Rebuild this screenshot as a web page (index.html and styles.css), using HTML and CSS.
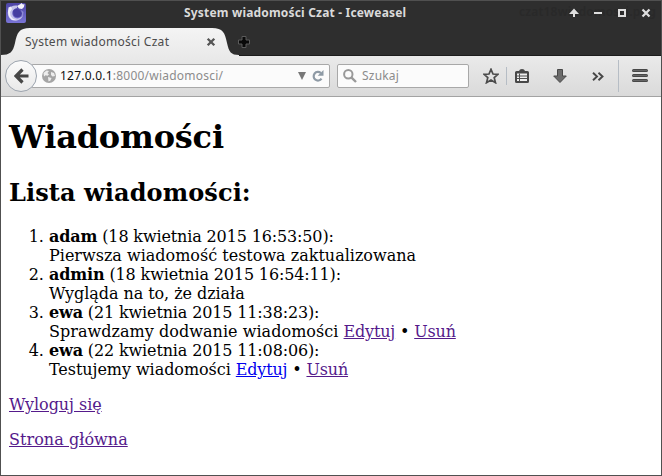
FILE: index.html
```html
<!DOCTYPE html>
<html lang="pl">
<head>
<meta charset="utf-8">
<title>System wiadomości Czat</title>
<link rel="stylesheet" href="styles.css">
</head>
<body>
<div class="window">
  <header class="titlebar">
    <svg class="app-icon" width="20" height="20" viewBox="0 0 20 20">
      <defs><linearGradient id="app" x1="0" y1="0" x2="0" y2="1"><stop offset="0" stop-color="#4d45a5"/><stop offset="1" stop-color="#7974d6"/></linearGradient></defs>
      <rect width="20" height="20" rx="2" fill="url(#app)"/>
      <path d="M11 2.500Q5 2 3 6Q.5 10 3 14.500Q6 18.500 11 17.500Q15.500 16.500 17 12.500L15 14Q12 16.500 8.500 14.500Q5.500 12 6.500 8.500Q7.500 5.500 11 5Z" fill="#c4c3ea"/>
      <path d="M2.500 4.500L5 3.500L6 6L4 9L4.500 13L6.500 15.500L10 17L6 17L3 13.500L2 9Z" fill="#f0f0fc"/>
      <path d="M7 8Q9 5 13 6.500L16 10Q16 13 13 14Q9 15 7.500 12Z" fill="#453ea0"/>
      <path d="M11 3L14.500 1L15.500 0L17 1.500L18.500 1L18 4L16 6L13 5.500Z" fill="#f4f4fb"/>
      <path d="M15 7L17.500 9L17 13L15.500 14L16 10Z" fill="#8e8bd6"/>
    </svg>
    <h1 class="window-title">System wiadomości Czat - Iceweasel</h1>
    <span class="ghost">czat18wiadomosci.png</span>
    <div class="controls">
      <svg width="10" height="10" viewBox="0 0 10 10"><path d="M5 .5L10 6H6V9H4V6H0Z" fill="#dedede"/></svg>
      <svg width="10" height="10" viewBox="0 0 10 10"><path d="M1 4h8v2H1Z" fill="#dedede"/></svg>
      <svg width="10" height="10" viewBox="0 0 10 10"><path d="M2 2h6v6H2Z" fill="none" stroke="#dedede" stroke-width="2"/></svg>
      <svg width="10" height="10" viewBox="0 0 10 10"><path d="M1.500 1.500L8.500 8.500M8.500 1.500L1.500 8.500" stroke="#dedede" stroke-width="2.300"/></svg>
    </div>
  </header>

  <nav class="tabs">
    <div class="tab">
      <svg class="tab-shape" width="240" height="28" viewBox="0 0 240 28">
        <defs><linearGradient id="tab" x1="0" y1="0" x2="0" y2="1"><stop offset="0" stop-color="#f4f4f4"/><stop offset="1" stop-color="#eaeaea"/></linearGradient></defs>
        <path d="M0 28V27C9 27 12 24 14 15C16 5 18 0 29 0H211C222 0 224 5 226 15C228 24 230 27 238 27V28Z" fill="url(#tab)"/>
      </svg>
      <span class="tab-label">System wiadomości Czat</span>
      <svg class="tab-close" width="10" height="10" viewBox="0 0 10 10"><path d="M1.700 1.700L8.300 8.300M8.300 1.700L1.700 8.300" stroke="#555" stroke-width="2.300"/></svg>
    </div>
    <svg class="tab-new" width="12" height="12" viewBox="0 0 12 12"><path d="M4 .5H8V4H11.500V8H8V11.500H4V8H.5V4H4Z" fill="#090909" stroke="#5b5b5b"/></svg>
  </nav>

  <div class="toolbar">
    <div class="back">
      <svg width="15" height="16" viewBox="0 0 15 16"><path d="M8.500 1.500L2 8L8.500 14.500M2.500 8H14.500" fill="none" stroke="#474747" stroke-width="3.200"/></svg>
    </div>
    <div class="address">
      <svg class="globe" width="14" height="14" viewBox="0 0 14 14"><circle cx="7" cy="7" r="7" fill="#a5a5a5"/><path d="M1.500 4L4.500 1.500L7 2L5.500 4L7 5.500L5 7L4 6L2 7.500ZM9 3L12 4L13 7L10.500 7.500L9 6ZM6 8L9.500 9L8.500 11.500L6.500 12.500Z" fill="#ededed"/></svg>
      <span class="url"><b>127.0.0.1</b>:8000/wiadomosci/</span>
      <svg class="dropmark" width="8" height="8" viewBox="0 0 8 8"><path d="M0 0H8L4 8Z" fill="#777"/></svg>
      <svg class="reload" width="12" height="12" viewBox="0 0 12 12"><path d="M9.500 8.700A4.300 4.300 0 1 1 8.800 3" fill="none" stroke="#8e9aa5" stroke-width="2.200"/><path d="M11.500 0V5.800H5.700Z" fill="#8e9aa5"/></svg>
    </div>
    <div class="search">
      <svg width="14" height="14" viewBox="0 0 14 14"><circle cx="5.300" cy="5.300" r="4.200" fill="none" stroke="#999" stroke-width="2"/><path d="M8.300 8.300L13 13" stroke="#999" stroke-width="2.400"/></svg>
      <span>Szukaj</span>
    </div>
    <svg class="star" width="16" height="16" viewBox="0 0 16 16"><path d="M8 1.300L10 6L15 6.300L11.200 9.600L12.500 14.700L8 12L3.500 14.700L4.800 9.600L1 6.300L6 6Z" fill="none" stroke="#4c4c4c" stroke-width="1.700"/></svg>
    <span class="divider short"></span>
    <svg class="clip" width="14" height="14" viewBox="0 0 14 14"><path d="M1.500 2H4Q4.500 0 7 0T10 2H12.500Q14 2 14 3.500V12.500Q14 14 12.500 14H1.500Q0 14 0 12.500V3.500Q0 2 1.500 2Z" fill="#484848"/><path d="M2 4.500H12V12H2Z" fill="#f0f0f0"/><path d="M2 7H12M2 9.500H12M4.500 4.500V12" stroke="#505050" stroke-width="1"/></svg>
    <svg class="download" width="14" height="14" viewBox="0 0 14 14"><path d="M4.500 .5H9.500V7H13.300L7 13.500L.7 7H4.500Z" fill="#6b6b6b" stroke="#484848"/></svg>
    <svg class="more" width="12" height="9" viewBox="0 0 12 9"><path d="M1 .8L5 4.500L1 8.200M6.500 .8L10.500 4.500L6.500 8.200" fill="none" stroke="#474747" stroke-width="1.900"/></svg>
    <span class="divider tall"></span>
    <svg class="menu" width="16" height="13" viewBox="0 0 16 13"><path d="M1.500 1.500H14.500M1.500 6.500H14.500M1.500 11.500H14.500" stroke="#484848" stroke-width="3" stroke-linecap="round"/><path d="M1 1.500H15M1 6.500H15M1 11.500H15" stroke="#666" stroke-width="1"/></svg>
  </div>

  <main class="page">
    <h1>Wiadomości</h1>
    <h2>Lista wiadomości:</h2>
    <ol>
      <li><span class="meta"><b>adam</b> (18 kwietnia 2015 16:53:50):</span><br>Pierwsza wiadomość testowa zaktualizowana</li>
      <li><span class="meta"><b>admin</b> (18 kwietnia 2015 16:54:11):</span><br><span class="tight">Wygląda na to, że działa</span></li>
      <li><span class="meta"><b>ewa</b> (21 kwietnia 2015 11:38:23):</span><br><span class="loose">Sprawdzamy dodwanie wiadomości</span> <span class="actions"><a href="#" class="seen">Edytuj</a> • <a href="#" class="seen">Usuń</a></span></li>
      <li><span class="meta"><b>ewa</b> (22 kwietnia 2015 11:08:06):</span><br><span class="tight">Testujemy wiadomości</span> <span class="actions"><a href="#">Edytuj</a> • <a href="#" class="seen">Usuń</a></span></li>
    </ol>
    <p><a href="#" class="seen tight">Wyloguj się</a></p>
    <p><a href="#" class="seen loose">Strona główna</a></p>
  </main>
</div>
</body>
</html>
```
FILE: styles.css
```css
* { box-sizing: border-box; }
body { margin: 0; overflow: hidden; }
svg { display: block; flex: none; }

.window {
  width: 662px;
  height: 476px;
  border: 1px solid #505050;
  background: #fff;
  font: 12px/16px "Noto Sans", sans-serif;
  display: flex;
  flex-direction: column;
}

.titlebar {
  position: relative;
  height: 27px;
  flex: none;
  background: #2e2e2e;
  display: flex;
  align-items: flex-start;
  padding: 2px 10px 0 5px;
}
.window-title {
  margin: 2px 0 0 158px;
  font-size: 12px;
  line-height: 16px;
  font-weight: 700;
  letter-spacing: .18px;
  color: #dadada;
  white-space: nowrap;
}
.ghost {
  position: absolute;
  right: 5px;
  top: 3px;
  font-size: 12px;
  font-weight: 600;
  letter-spacing: .2px;
  color: #292929;
}
.controls {
  position: relative;
  display: flex;
  gap: 14px;
  margin: 5px 0 0 auto;
}

.tabs {
  height: 28px;
  flex: none;
  background: #2e2e2e;
  box-shadow: inset 0 -1px #1c1c1c;
  display: flex;
}
.tab {
  position: relative;
  width: 240px;
  height: 28px;
  display: flex;
  align-items: center;
  padding: 0 25px 0 24px;
}
.tab-shape { position: absolute; left: 0; top: 0; }
.tab-label { position: relative; letter-spacing: .27px; color: #4c4c4c; white-space: nowrap; }
.tab-close { position: relative; margin-left: auto; }
.tab-new { margin: 8px 0 0 -3px; }

.toolbar {
  height: 41px;
  flex: none;
  display: flex;
  align-items: center;
  padding-left: 4px;
  background: linear-gradient(#eaeaea, #dadada);
  border-bottom: 1px solid #a3a3a3;
}
.back {
  position: relative;
  width: 32px;
  height: 32px;
  flex: none;
  border: 1px solid #9ca4ae;
  border-radius: 50%;
  background: linear-gradient(#fbfbfb, #e9e9e9);
  display: grid;
  place-items: center;
}
.address, .search {
  height: 24px;
  flex: none;
  border: 1px solid #a8a8a8;
  border-radius: 2px;
  background: #fbfbfb;
  display: flex;
  align-items: center;
}
.address { width: 299px; margin-left: -6px; padding: 0 5px 0 10px; }
.url { margin-left: 4px; letter-spacing: .22px; color: #8c8c8c; white-space: nowrap; }
.url b { font-weight: 400; color: #111; }
.dropmark { margin-left: auto; }
.reload { margin-left: 6px; }
.search { width: 132px; margin-left: 7px; padding-left: 5px; color: #8c8c8c; }
.search span { margin-left: 5px; letter-spacing: .2px; }
.star { margin-left: 14px; }
.divider { flex: none; width: 1px; background: #b6bdc5; }
.short { height: 18px; margin-left: 7px; }
.clip { margin-left: 8px; }
.download { margin-left: 24px; }
.more { margin-left: 25px; }
.tall { height: 32px; margin-left: 14px; }
.menu { margin: 0 0 2px 13px; }

.page {
  flex: 1;
  padding: 0 8px;
  color: #000;
  font: 16px/19px "DejaVu Serif", serif;
}
.page h1 { margin: 21px 0 23px; font-size: 32px; line-height: 38px; letter-spacing: -.2px; }
.page h2 { margin: 0 0 20px; font-size: 24px; line-height: 28px; letter-spacing: .1px; }
.page ol { margin: 0 0 16px; padding-left: 40px; }
.page p { margin: 0 0 16px; }
.page a { color: #00e; text-decoration: underline; }
.page a.seen { color: #551a8b; }
.meta { letter-spacing: -.14px; }
.actions { letter-spacing: -.18px; }
.tight { letter-spacing: -.06px; }
.loose { letter-spacing: .04px; }
```
